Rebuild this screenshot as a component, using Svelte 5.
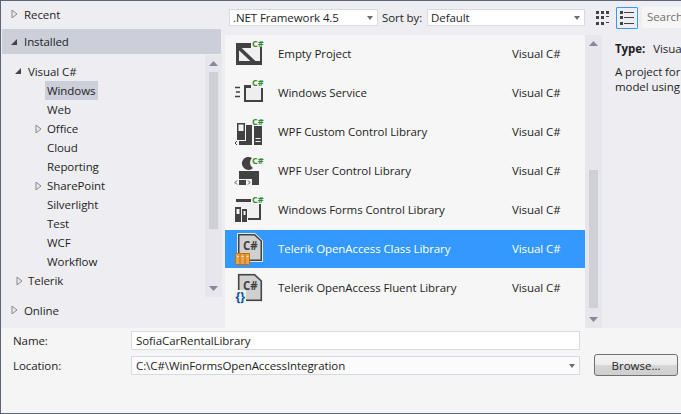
<script>
  const tree = [
    { label: 'Visual C#', indent: 27, arrow: 'open', ax: 13 },
    { label: 'Windows', indent: 46, selected: true },
    { label: 'Web', indent: 46 },
    { label: 'Office', indent: 46, arrow: 'closed', ax: 34 },
    { label: 'Cloud', indent: 46 },
    { label: 'Reporting', indent: 46 },
    { label: 'SharePoint', indent: 46, arrow: 'closed', ax: 34 },
    { label: 'Silverlight', indent: 46 },
    { label: 'Test', indent: 46 },
    { label: 'WCF', indent: 46 },
    { label: 'Workflow', indent: 46 },
    { label: 'Telerik', indent: 27, arrow: 'closed', ax: 15 }
  ];

  const templates = [
    { name: 'Empty Project', icon: 'empty' },
    { name: 'Windows Service', icon: 'service' },
    { name: 'WPF Custom Control Library', icon: 'wpfcustom' },
    { name: 'WPF User Control Library', icon: 'wpfuser' },
    { name: 'Windows Forms Control Library', icon: 'forms' },
    { name: 'Telerik OpenAccess Class Library', icon: 'oaclass', selected: true },
    { name: 'Telerik OpenAccess Fluent Library', icon: 'oafluent' }
  ];
</script>

{#snippet closedArrow()}
  <svg class="arrow" width="7" height="10" viewBox="0 0 7 10">
    <path d="M1 1 L6 5 L1 9 Z" fill="#e8e8ea" stroke="#8a8a8a" />
  </svg>
{/snippet}

{#snippet openArrow()}
  <svg class="arrow" width="8" height="8" viewBox="0 0 8 8">
    <path d="M7 1 V7 H1 Z" fill="#444" />
  </svg>
{/snippet}

{#snippet scrollbar(thumbTop, thumbHeight)}
  <div class="scrollbar">
    <svg class="sb-arrow" width="9" height="5" viewBox="0 0 9 5"><path d="M0 5 L4.5 0 L9 5 Z" fill="#868999" /></svg>
    <div class="sb-track">
      <div class="sb-thumb" style="margin-top:{thumbTop}px;height:{thumbHeight}px"></div>
    </div>
    <svg class="sb-arrow" width="9" height="5" viewBox="0 0 9 5"><path d="M0 0 L4.5 5 L9 0 Z" fill="#868999" /></svg>
  </div>
{/snippet}

{#snippet csharp(y = 9)}
  <text x="18" {y} class="cs">C#</text>
{/snippet}

{#snippet icon(kind)}
  <svg class="icon" width="32" height="34" viewBox="0 0 32 34">
    {#if kind === 'empty'}
      <path d="M4 9 H26 V24 H4 Z" fill="#f0eff1" />
      <path d="M2 5 H17 V10 H5 V23 H26 V9 H28 V27 H2 Z" fill="#424242" />
      <path d="M4 9 L21 25" stroke="#424242" stroke-width="3.6" />
      {@render csharp()}
    {:else if kind === 'service'}
      <path d="M11 10 H28 V24 H11 Z" fill="#eeeef0" />
      <path d="M10 8 H17 V11 H12 V23 H27 V11 H29 V25 H10 Z" fill="#424242" />
      <path d="M1 10.5 H6 M2 15 H6 M1 19.5 H6" stroke="#424242" stroke-width="1.5" />
      {@render csharp()}
    {:else if kind === 'wpfcustom'}
      <path d="M3.75 7.75 H10.25 V16 H3.75 Z" fill="#f4f4f4" stroke="#424242" stroke-width="1.5" />
      <path d="M3 15 H11 V24 H3 Z" fill="#424242" />
      <path d="M12 9 H18 V29 H12 Z" fill="#424242" />
      <path d="M20 10 H28 V29 H20 Z" fill="#424242" />
      <path d="M21.5 22.5 H26.5 M21.5 25.5 H26.5" stroke="#f4f4f4" />
      <path d="M5 25 H12 V29 H5 Z" fill="#424242" />
      <path d="M3 25 L1 27 L3 29 M14 25 L16 27 L14 29" fill="none" stroke="#424242" />
      {@render csharp()}
    {:else if kind === 'wpfuser'}
      <path d="M18 3 A6.5 6.5 0 1 0 19 13 A6 6 0 0 1 16 8 A6 6 0 0 1 18 3 Z" fill="#424242" />
      <path d="M5 16 H25 V30 H18 V24 H5 Z" fill="#424242" />
      <path d="M5 25 H12 V30 H5 Z" fill="#424242" />
      <path d="M3 25.5 L1 27.5 L3 29.5 M14 25.5 L16 27.5 L14 29.5" fill="none" stroke="#424242" />
      {@render csharp()}
    {:else if kind === 'forms'}
      <path d="M3 8 H25 V24 H3 Z" fill="#f0f0f2" />
      <path d="M2 5 H17 V8 H2 Z" fill="#424242" />
      <path d="M25 10 H27 V26 H14 V24 H25 Z" fill="#424242" />
      <path d="M1 13 H7 V28 H1 Z" fill="#424242" />
      <path d="M8 15 H13 V28 H8 Z" fill="#424242" />
      <path d="M2.5 15 H5.5 V20 H2.5 Z M9.5 17 H11.5 V21 H9.5 Z" fill="#f4f4f4" />
      {@render csharp()}
    {:else}
      {@const dy = kind === 'oaclass' ? 0 : 1}
      <g transform="translate(0 {dy})">
        <path d="M3.5 0.5 H21 L28.5 7.5 V28.5 H3.5 Z" fill="#d0d0d0" stroke="#e8e8e8" stroke-width="1" />
        <path d="M4.75 1.75 H20.5 L27.25 8 V27.25 H4.75 Z" fill="#d0d0d0" stroke="#424242" stroke-width="1.5" />
        <text x="9" y="16.5" class="cs-doc">C#</text>
      </g>
      {#if kind === 'oaclass'}
        <path d="M1.5 20.5 H15.5 V31.5 H1.5 Z" fill="#e8a34b" stroke="#c86f0a" />
        <path d="M6 20.5 V31.5 M11 20.5 V31.5" stroke="#c86f0a" />
        <path d="M3 23.5 H5 M7.5 23.5 H9.5 M12.5 23.5 H14.5" stroke="#fbe3c3" />
      {:else}
        <rect x="1" y="18" width="11" height="13" fill="#f0f0f0" />
        <text x="1.5" y="29" class="braces">{'{}'}</text>
      {/if}
    {/if}
  </svg>
{/snippet}

<div class="window">
  <div class="main">
    <aside class="sidebar">
      <div class="section recent">
        {@render closedArrow()}
        <span>Recent</span>
      </div>
      <div class="section installed">
        {@render openArrow()}
        <span>Installed</span>
      </div>
      <div class="tree-wrap">
        <ul class="tree">
          {#each tree as node}
            <li class="node" style="padding-left:{node.indent}px">
              {#if node.arrow}
                <span class="node-arrow" style="left:{node.ax}px">
                  {#if node.arrow === 'open'}
                    {@render openArrow()}
                  {:else}
                    {@render closedArrow()}
                  {/if}
                </span>
              {/if}
              <span class="node-label" class:selected={node.selected}>{node.label}</span>
            </li>
          {/each}
        </ul>
        {@render scrollbar(6, 157)}
      </div>
      <div class="section online">
        {@render closedArrow()}
        <span>Online</span>
      </div>
    </aside>

    <div class="content">
      <div class="toolbar">
        <div class="combo framework">
          <span>.NET Framework 4.5</span>
          <i class="caret"></i>
        </div>
        <span class="sort-label">Sort by:</span>
        <div class="combo sort">
          <span>Default</span>
          <i class="caret"></i>
        </div>
        <button class="view-btn grid-view" aria-label="Small icons">
          <svg width="14" height="15" viewBox="0 0 14 15">
            <path d="M0 0h3v3H0zM5 0h3v3H5zM10 0h3v3h-3zM0 5h3v3H0zM5 5h3v3H5zM0 11h3v3H0zM5 11h3v3H5z" fill="#424242" />
            <path d="M10 5h3v1h-3zM10 11h3v1h-3z" fill="#424242" />
          </svg>
        </button>
        <button class="view-btn list-view" aria-label="Details">
          <svg width="14" height="14" viewBox="0 0 14 14">
            <path d="M0 0h3v3H0zM0 5h3v3H0zM0 11h3v3H0z" fill="#424242" />
            <path d="M4 1h10v1H4zM4 6h10v1H4zM4 12h10v1H4z" fill="#424242" />
          </svg>
        </button>
        <div class="search">Search Installed Templates</div>
      </div>

      <div class="panes">
        <div class="list">
          {#each templates as t}
            <div class="row" class:selected={t.selected}>
              {@render icon(t.icon)}
              <span class="row-name">{t.name}</span>
              <span class="row-lang">Visual C#</span>
            </div>
          {/each}
        </div>
        {@render scrollbar(124, 138)}
        <div class="details">
          <div class="type"><b>Type:</b><span>Visual C#</span></div>
          <p>A project for creating a class library<br />model using Telerik OpenAccess</p>
        </div>
      </div>
    </div>
  </div>

  <div class="form">
    <div class="fields">
      <label class="field">
        <span class="field-label">Name:</span>
        <span class="input">SofiaCarRentalLibrary</span>
      </label>
      <label class="field">
        <span class="field-label">Location:</span>
        <span class="input loc">
          C:\C#\WinFormsOpenAccessIntegration
          <i class="caret"></i>
        </span>
      </label>
    </div>
    <button class="browse">Browse...</button>
  </div>
</div>

<style>
  :global(body) {
    margin: 0;
    font-family: "Open Sans", "Liberation Sans", sans-serif;
    font-size: 11.5px;
    letter-spacing: -0.08px;
    color: #1e1e1e;
  }

  .window {
    width: 681px;
    height: 414px;
    box-sizing: border-box;
    border: 1px solid #596779;
    border-right: 0;
    background: #f5f5f5;
    display: flex;
    flex-direction: column;
    overflow: hidden;
  }

  .main {
    height: 327px;
    display: flex;
    background: #eeeef2;
    flex: none;
  }

  .sidebar {
    width: 224px;
    flex: none;
    display: flex;
    flex-direction: column;
  }

  .section {
    display: flex;
    align-items: center;
  }

  .recent {
    height: 26px;
    padding: 0 0 2px 10px;
    gap: 6px;
  }

  .installed {
    height: 25px;
    margin: 0 4px 0 1px;
    padding-left: 8px;
    gap: 6px;
    background: #ccceda;
  }

  .online {
    height: 26px;
    padding-left: 10px;
    gap: 6px;
  }

  .tree-wrap {
    height: 243px;
    padding: 1px 3px 0 0;
    box-sizing: border-box;
    display: flex;
  }

  .tree {
    list-style: none;
    margin: 0;
    padding: 7px 0 0;
    flex: 1;
    min-width: 0;
  }

  .node {
    position: relative;
    height: 19px;
    line-height: 19px;
  }

  .node-arrow {
    position: absolute;
    top: 5px;
    line-height: 0;
  }

  .node-label {
    display: inline-block;
    padding: 0 3px 0 2px;
    margin-left: -2px;
  }

  .node-label.selected {
    background: #ccceda;
  }

  .scrollbar {
    width: 17px;
    flex: none;
    background: #e6e6ec;
    display: flex;
    flex-direction: column;
    align-items: center;
    padding: 6px 0;
    box-sizing: border-box;
  }

  .sb-arrow {
    flex: none;
  }

  .sb-track {
    flex: 1;
    width: 9px;
  }

  .sb-thumb {
    background: #ced0d6;
  }

  .content {
    flex: 1;
    min-width: 0;
    display: flex;
    flex-direction: column;
  }

  .toolbar {
    height: 34px;
    flex: none;
    box-sizing: border-box;
    padding: 6px 0 0 4px;
    display: flex;
    align-items: flex-start;
  }

  .combo {
    height: 17px;
    margin-top: 2px;
    box-sizing: border-box;
    border: 1px solid #d8d9e3;
    background: #fff;
    display: flex;
    align-items: center;
    justify-content: space-between;
    padding: 0 4px 0 3px;
    line-height: 14px;
  }

  .framework {
    width: 149px;
  }

  .sort-label {
    margin: 2px 0 0 4px;
    width: 45px;
    flex: none;
    line-height: 17px;
  }

  .sort {
    width: 158px;
  }

  .caret {
    width: 0;
    height: 0;
    border: 3.5px solid transparent;
    border-top: 4px solid #6d6d6d;
    border-bottom: 0;
  }

  .view-btn {
    border: 1px solid transparent;
    background: none;
    padding: 0;
    height: 22px;
    display: flex;
    align-items: center;
    justify-content: center;
    flex: none;
  }

  .grid-view {
    width: 19px;
    margin: 0 0 0 11px;
    border: 0;
    justify-content: flex-start;
  }

  .list-view {
    width: 22px;
    margin: 0 0 0 1px;
    border-color: #3399ff;
    border-radius: 1px;
  }

  .search {
    margin-left: 4px;
    height: 21px;
    line-height: 20px;
    padding-left: 5px;
    flex: 1;
    min-width: 0;
    background: #f6f6f6;
    color: #717171;
    white-space: nowrap;
    overflow: hidden;
  }

  .panes {
    flex: 1;
    display: flex;
    min-height: 0;
  }

  .list {
    width: 360px;
    flex: none;
    background: #f6f6f6;
    display: flex;
    flex-direction: column;
    gap: 1px;
  }

  .row {
    height: 38px;
    flex: none;
    display: flex;
    align-items: center;
  }

  .row.selected {
    background: #3399ff;
    color: #fff;
  }

  .row-name,
  .row-lang {
    margin-bottom: 2px;
  }

  .icon {
    margin: 2px 0 0 9px;
    flex: none;
    overflow: visible;
  }

  .row-name {
    margin-left: 12px;
    width: 234px;
    flex: none;
    white-space: nowrap;
  }

  .cs {
    font: bold 9px "Open Sans", sans-serif;
    fill: #388a34;
  }

  .cs-doc {
    font: bold 11.5px "Open Sans", sans-serif;
    fill: #424242;
  }

  .braces {
    font: bold 12px "Open Sans", sans-serif;
    fill: #00539c;
  }

  .details {
    flex: 1;
    min-width: 0;
    padding: 6px 0 0 13px;
    white-space: nowrap;
    overflow: hidden;
  }

  .type {
    display: flex;
    gap: 8px;
    line-height: 16px;
  }

  .details p {
    margin: 7px 0 0;
    line-height: 15px;
  }

  .form {
    flex: 1;
    display: flex;
    align-items: flex-start;
    padding: 3px 3px 0 12px;
  }

  .fields {
    width: 567px;
    flex: none;
    display: flex;
    flex-direction: column;
    gap: 6px;
  }

  .field {
    display: flex;
    align-items: center;
    height: 19px;
  }

  .field-label {
    width: 118px;
    flex: none;
  }

  .input {
    flex: 1;
    height: 19px;
    box-sizing: border-box;
    border: 1px solid #d8d9e3;
    background: #fff;
    padding: 0 4px;
    line-height: 17px;
    white-space: nowrap;
    display: flex;
    align-items: center;
    justify-content: space-between;
  }

  .input.loc {
    background: #fbfbfb;
  }

  .browse {
    margin: 23px 0 0 14px;
    width: 84px;
    height: 22px;
    padding: 0;
    box-sizing: border-box;
    border: 1px solid #707070;
    border-radius: 3px;
    background: linear-gradient(#f4f4f4 0%, #ececec 48%, #d6d6d6 52%, #cfcfcf 100%);
    font: inherit;
    color: #1e1e1e;
  }
</style>
